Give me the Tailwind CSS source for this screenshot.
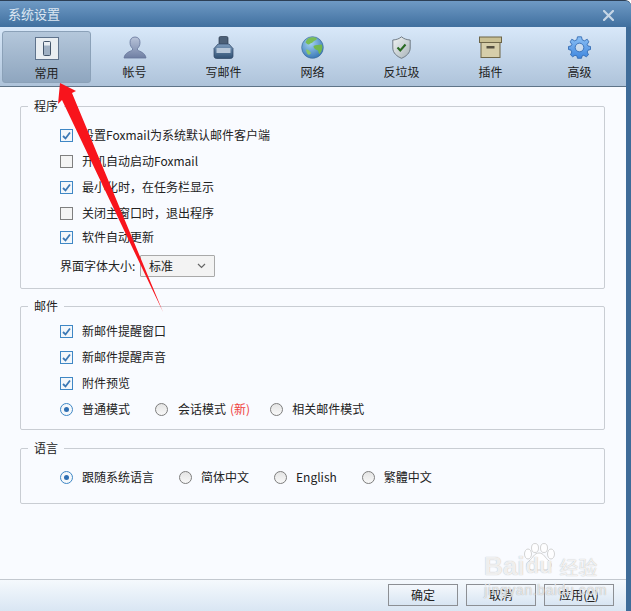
<!DOCTYPE html>
<html lang="zh">
<head>
<meta charset="utf-8">
<script src="https://cdn.jsdelivr.net/npm/@tailwindcss/browser@4"></script>
</head>
<body class="m-0 overflow-hidden">
<div class="relative flex h-[611px] w-[631px] flex-col overflow-hidden rounded-tr-[6px] border-t border-t-[#2c3f55] bg-[#3f6c99] font-['Noto_Sans_CJK_SC','Noto_Sans',sans-serif] text-[12px] leading-[16px] text-[#222]">
  <!-- title bar -->
  <div class="flex h-[26px] shrink-0 items-center justify-between bg-gradient-to-b from-[#6f9ac5] to-[#40709f] pl-[8px] pr-[17px]">
    <span class="text-[13px] text-[#dce7f2]">系统设置</span>
    <svg width="11" height="11" viewBox="0 0 11 11" class="mt-[2px]"><path d="M1 1 L10 10 M10 1 L1 10" stroke="#c6d6e6" stroke-width="2.2" stroke-linecap="square"/></svg>
  </div>
  <!-- inner -->
  <div class="mr-[5px] flex min-h-0 flex-1 flex-col">
    <!-- toolbar -->
    <div class="flex h-[60px] shrink-0 border-b border-b-[#5f7488] bg-gradient-to-b from-[#d8e8f9] to-[#aec3da] pl-[1px]">
      <div class="ml-[1px] mt-[4px] flex h-[52px] w-[89px] shrink-0 flex-col items-center rounded-[3px] border border-[#8ba1b8] bg-gradient-to-b from-[#b4c7db] to-[#8fa6bf] pt-[5px] -mr-[1px]">
        <svg width="24" height="23" viewBox="0 0 24 23"><rect x="0.5" y="0.5" width="23" height="22" fill="#e9eef2" stroke="#5f738c"/><rect x="8.5" y="4.5" width="7" height="14" rx="1" fill="#9fb0c3" stroke="#44566b"/><rect x="9" y="5" width="6" height="3.5" fill="#e8edf2"/></svg>
        <span class="mt-[5px]">常用</span>
      </div>
      <div class="flex w-[89px] shrink-0 flex-col items-center pt-[9px]">
        <svg width="24" height="23" viewBox="0 0 24 23"><defs><linearGradient id="p" x1="0" y1="0" x2="0" y2="1"><stop offset="0" stop-color="#b9c4da"/><stop offset="1" stop-color="#6f7fa3"/></linearGradient></defs><path d="M12 1C8.500 1 7 3.600 7 6.500C7 9.500 8.500 11.500 9.500 12.500V14C7 15.800 2 16.300 1 22H23C22 16.300 17 15.800 14.500 14V12.500C15.500 11.500 17 9.500 17 6.500C17 3.600 15.500 1 12 1Z" fill="url(#p)" stroke="#66759a" stroke-width=".8"/></svg>
        <span class="mt-[5px]">帐号</span>
      </div>
      <div class="flex w-[89px] shrink-0 flex-col items-center pt-[9px]">
        <svg width="21" height="23" viewBox="0 0 21 23"><defs><linearGradient id="i" x1="0" y1="0" x2="0" y2="1"><stop offset="0" stop-color="#7d9cbd"/><stop offset="1" stop-color="#2f4f72"/></linearGradient></defs><rect x="6" y="0.500" width="9" height="8" rx="1.500" fill="#4c6077" stroke="#2c3b4f" stroke-width=".7"/><path d="M5 8H16L20 12.500V20C20 21.500 19 22.500 17.500 22.500H3.500C2 22.500 1 21.500 1 20V12.500Z" fill="url(#i)" stroke="#2c4461" stroke-width=".7"/><rect x="3.500" y="12" width="14" height="5" fill="#b7c7d9"/></svg>
        <span class="mt-[5px]">写邮件</span>
      </div>
      <div class="flex w-[89px] shrink-0 flex-col items-center pt-[9px]">
        <svg width="23" height="23" viewBox="0 0 23 23"><defs><radialGradient id="g" cx=".4" cy=".3" r=".8"><stop offset="0" stop-color="#a5d3f2"/><stop offset="1" stop-color="#2d6eb0"/></radialGradient></defs><circle cx="11.500" cy="11.500" r="10.800" fill="url(#g)" stroke="#3d6e9f" stroke-width=".7"/><path d="M7 2.500C10 .8 14 1 16 2.500C15.500 4.500 13 4.500 12 6C11 7.500 9 7 8 8.500C6.500 9 5.500 7 4.500 6.500C5 5 6 3.500 7 2.500Z" fill="#79bd56"/><path d="M12.500 10C14.500 8.500 18 9 21 8.500C22 11.500 21 15.500 18.500 18C17 16.500 18 14.500 16 14C14 13.500 12.500 12 12.500 10Z" fill="#72b84d"/><path d="M5 13.500C7 13 9 15 10 17C9 19 7.500 19 6.500 18C6 16.500 5 15.500 5 13.500Z" fill="#8bc866"/></svg>
        <span class="mt-[5px]">网络</span>
      </div>
      <div class="flex w-[89px] shrink-0 flex-col items-center pt-[9px]">
        <svg width="19" height="23" viewBox="0 0 19 23"><defs><linearGradient id="s" x1="0" y1="0" x2="1" y2="1"><stop offset="0" stop-color="#f2f5f5"/><stop offset="1" stop-color="#a8b3b8"/></linearGradient></defs><path d="M9.500 .8C7 3 4 3.800 .8 4V12C.8 17 5 20.500 9.500 22.300C14 20.500 18.200 17 18.200 12V4C15 3.800 12 3 9.500 .8Z" fill="url(#s)" stroke="#66727c" stroke-width=".9"/><path d="M5.500 11.500L8.300 14.500L13.500 8.500" fill="none" stroke="#2a6a22" stroke-width="2.100"/></svg>
        <span class="mt-[5px]">反垃圾</span>
      </div>
      <div class="flex w-[89px] shrink-0 flex-col items-center pt-[9px]">
        <svg width="23" height="22" viewBox="0 0 23 22" class="mb-[1px]"><rect x="2" y="5" width="19" height="16.500" fill="#d6ceaa" stroke="#6d6547"/><rect x=".5" y="1" width="22" height="5.500" fill="#c9c094" stroke="#6d6547"/><rect x="7.500" y="10" width="8" height="2.500" fill="#555040"/></svg>
        <span class="mt-[5px]">插件</span>
      </div>
      <div class="flex w-[89px] shrink-0 flex-col items-center pt-[9px]">
        <svg width="23" height="23" viewBox="0 0 23 23"><defs><linearGradient id="c" x1="0" y1="0" x2="0" y2="1"><stop offset="0" stop-color="#8cc0f5"/><stop offset="1" stop-color="#3f86de"/></linearGradient></defs><path fill-rule="evenodd" d="M9.500 .8H13.500L14.200 3.800L16.500 4.800L19.200 3.200L20.800 5.800L19.200 8.400L20 10L22.500 10.500V13.500L20 14.200L19.200 16L20.500 18.800L18.300 20.800L15.800 19.300L14 20L13.500 22.300H9.500L9 20L7 19.300L4.700 20.800L2.500 18.800L3.800 16L3 14.200L.5 13.500V10.500L3 10L3.800 8.400L2.200 5.800L3.800 3.200L6.500 4.800L8.800 3.800ZM11.500 7.200A4.300 4.300 0 1 0 11.500 15.800A4.300 4.300 0 1 0 11.500 7.200Z" fill="url(#c)" stroke="#2a63ad" stroke-width=".8"/></svg>
        <span class="mt-[5px]">高级</span>
      </div>
    </div>
    <!-- content -->
    <div class="flex min-h-0 flex-1 flex-col bg-[#f9fbff] px-[20px] pr-[21px] pt-[19px]">
      <!-- 程序 -->
      <div class="relative h-[183px] shrink-0 rounded-[2px] border border-[#c9cdd3] pl-[39px] pt-[15px]">
        <span class="absolute left-[7px] top-[-9px] bg-[#f9fbff] px-[6px]">程序</span>
        <div class="flex h-[26px] items-center gap-[9px]">
          <span class="flex size-[13px] items-center justify-center border border-[#3f87c5] bg-[#f3f7fb]"><svg width="11" height="11" viewBox="0 0 11 11"><path d="M2 6L4.500 8.500L9 2.500" fill="none" stroke="#3b78b5" stroke-width="1.800"/></svg></span><span>设置Foxmail为系统默认邮件客户端</span>
        </div>
        <div class="flex h-[26px] items-center gap-[9px]">
          <span class="size-[13px] border border-[#7f7f7f] bg-[#f4f4f4]"></span><span>开机自动启动Foxmail</span>
        </div>
        <div class="flex h-[26px] items-center gap-[9px]">
          <span class="flex size-[13px] items-center justify-center border border-[#3f87c5] bg-[#f3f7fb]"><svg width="11" height="11" viewBox="0 0 11 11"><path d="M2 6L4.500 8.500L9 2.500" fill="none" stroke="#3b78b5" stroke-width="1.800"/></svg></span><span>最小化时，在任务栏显示</span>
        </div>
        <div class="flex h-[26px] items-center gap-[9px]">
          <span class="size-[13px] border border-[#7f7f7f] bg-[#f4f4f4]"></span><span>关闭主窗口时，退出程序</span>
        </div>
        <div class="-mt-[2px] flex h-[26px] items-center gap-[9px]">
          <span class="flex size-[13px] items-center justify-center border border-[#3f87c5] bg-[#f3f7fb]"><svg width="11" height="11" viewBox="0 0 11 11"><path d="M2 6L4.500 8.500L9 2.500" fill="none" stroke="#3b78b5" stroke-width="1.800"/></svg></span><span>软件自动更新</span>
        </div>
        <div class="mt-[5px] flex h-[22px] items-center">
          <span class="w-[80px] whitespace-nowrap">界面字体大小:</span>
          <div class="flex h-[22px] w-[75px] items-center justify-between rounded-[1px] border border-[#a9a9a9] bg-[#f3f3f3] pl-[8px] pr-[8px]">
            <span>标准</span>
            <svg width="9" height="6" viewBox="0 0 9 6"><path d="M1 1L4.500 4.500L8 1" fill="none" stroke="#666" stroke-width="1.200"/></svg>
          </div>
        </div>
      </div>
      <!-- 邮件 -->
      <div class="relative mt-[17px] h-[124px] shrink-0 rounded-[2px] border border-[#c9cdd3] pl-[39px] pt-[11px]">
        <span class="absolute left-[7px] top-[-9px] bg-[#f9fbff] px-[6px]">邮件</span>
        <div class="flex h-[26px] items-center gap-[9px]">
          <span class="flex size-[13px] items-center justify-center border border-[#3f87c5] bg-[#f3f7fb]"><svg width="11" height="11" viewBox="0 0 11 11"><path d="M2 6L4.500 8.500L9 2.500" fill="none" stroke="#3b78b5" stroke-width="1.800"/></svg></span><span>新邮件提醒窗口</span>
        </div>
        <div class="flex h-[26px] items-center gap-[9px]">
          <span class="flex size-[13px] items-center justify-center border border-[#3f87c5] bg-[#f3f7fb]"><svg width="11" height="11" viewBox="0 0 11 11"><path d="M2 6L4.500 8.500L9 2.500" fill="none" stroke="#3b78b5" stroke-width="1.800"/></svg></span><span>新邮件提醒声音</span>
        </div>
        <div class="flex h-[26px] items-center gap-[9px]">
          <span class="flex size-[13px] items-center justify-center border border-[#3f87c5] bg-[#f3f7fb]"><svg width="11" height="11" viewBox="0 0 11 11"><path d="M2 6L4.500 8.500L9 2.500" fill="none" stroke="#3b78b5" stroke-width="1.800"/></svg></span><span>附件预览</span>
        </div>
        <div class="flex h-[26px] items-center">
          <span class="flex size-[13px] items-center justify-center rounded-full border border-[#3f87c5] bg-[#f5f8fb]"><span class="size-[5px] rounded-full bg-[#2f6fb3]"></span></span><span class="ml-[9px]">普通模式</span>
          <span class="ml-[25px] size-[13px] rounded-full border border-[#7d7d7d] bg-gradient-to-b from-[#e4e4e4] to-[#f8f8f8]"></span><span class="ml-[10px]">会话模式</span><span class="ml-[4px] text-[#f0403c]">(新)</span>
          <span class="ml-[20px] size-[13px] rounded-full border border-[#7d7d7d] bg-gradient-to-b from-[#e4e4e4] to-[#f8f8f8]"></span><span class="ml-[9px]">相关邮件模式</span>
        </div>
      </div>
      <!-- 语言 -->
      <div class="relative mt-[18px] h-[56px] shrink-0 rounded-[2px] border border-[#c9cdd3] pl-[39px] pt-[15px]">
        <span class="absolute left-[7px] top-[-9px] bg-[#f9fbff] px-[6px]">语言</span>
        <div class="flex h-[26px] items-center">
          <span class="flex size-[13px] items-center justify-center rounded-full border border-[#3f87c5] bg-[#f5f8fb]"><span class="size-[5px] rounded-full bg-[#2f6fb3]"></span></span><span class="ml-[9px]">跟随系统语言</span>
          <span class="ml-[25px] size-[13px] rounded-full border border-[#7d7d7d] bg-gradient-to-b from-[#e4e4e4] to-[#f8f8f8]"></span><span class="ml-[9px]">简体中文</span>
          <span class="ml-[25px] size-[13px] rounded-full border border-[#7d7d7d] bg-gradient-to-b from-[#e4e4e4] to-[#f8f8f8]"></span><span class="ml-[9px]">English</span>
          <span class="ml-[25px] size-[13px] rounded-full border border-[#7d7d7d] bg-gradient-to-b from-[#e4e4e4] to-[#f8f8f8]"></span><span class="ml-[9px]">繁體中文</span>
        </div>
      </div>
    </div>
    <!-- footer -->
    <div class="flex h-[32px] shrink-0 justify-end gap-[8px] border-t border-t-[#c3c8cf] bg-gradient-to-b from-[#f5f9fd] to-[#d9e6f3] pr-[12px] pt-[4px]">
      <div class="flex h-[22px] w-[70px] items-center justify-center border border-[#8c8f94] bg-gradient-to-b from-[#f4f8fc] to-[#d8e5f2]">确定</div>
      <div class="flex h-[22px] w-[70px] items-center justify-center border border-[#8c8f94] bg-gradient-to-b from-[#f4f8fc] to-[#d8e5f2]">取消</div>
      <div class="flex h-[22px] w-[70px] items-center justify-center border border-[#8c8f94] bg-gradient-to-b from-[#f4f8fc] to-[#d8e5f2]">应用(<span class="underline">A</span>)</div>
    </div>
  </div>
  <!-- red annotation arrow -->
  <svg class="absolute left-0 top-[-1px]" width="631" height="611" viewBox="0 0 631 611"><polygon points="60,83 76,91 72,93 163,312 62,100 58,104" fill="#f8141c"/></svg>
  <!-- watermark -->
  <svg class="absolute left-[521px] top-[542px]" width="36" height="28" viewBox="0 0 36 28" fill="#fff" fill-opacity=".75" stroke="#c8c8c8" stroke-width=".8"><ellipse cx="7" cy="11" rx="3.500" ry="5"/><ellipse cx="14" cy="5" rx="3.500" ry="4.500"/><ellipse cx="23" cy="5" rx="3.500" ry="4.500"/><ellipse cx="30" cy="11" rx="3.500" ry="5"/><path d="M18 10C13 10 12 15 8 18C3 22 7 27 12 27H24C29 27 33 22 28 18C24 15 23 10 18 10Z"/></svg>
  <div class="absolute left-[484px] top-[552px] flex items-end">
    <span class="font-['Liberation_Sans',sans-serif] text-[26px] font-bold leading-[26px] text-white/80 [text-shadow:0_0_1px_#aaa]">Bai</span>
    <span class="relative ml-[1px] font-['Liberation_Sans',sans-serif] text-[22px] font-bold leading-[26px] text-white/80 [text-shadow:0_0_1px_#aaa]">du</span>
    <span class="ml-[7px] text-[19px] leading-[24px] text-white/80 [text-shadow:0_0_1px_#aaa]">经验</span>
  </div>
  <div class="absolute left-[484px] top-[581px] font-['Liberation_Sans',sans-serif] text-[14px] leading-[16px] tracking-[0.6px] text-white/70 [text-shadow:0_0_1px_#999]">jingyan.baidu.com</div>
</div>
</body>
</html>
